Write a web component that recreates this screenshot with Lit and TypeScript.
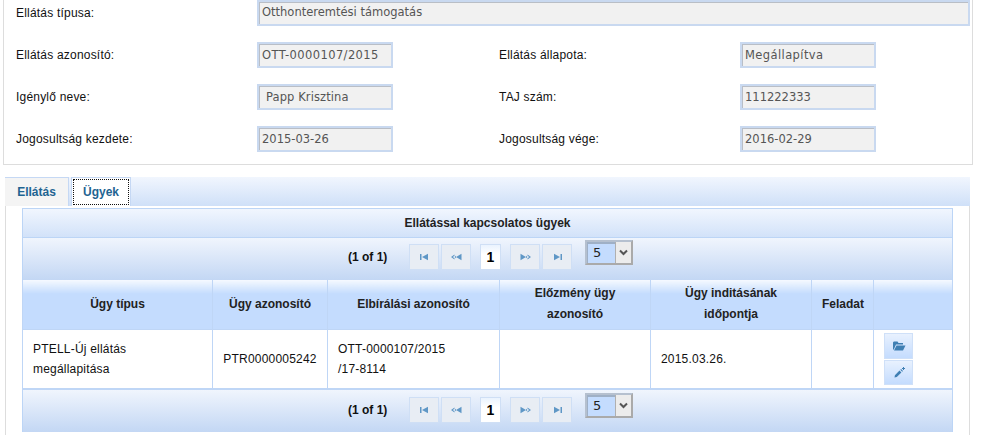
import { LitElement, html, css, svg } from "lit";
import { customElement } from "lit/decorators.js";

const ICONS: Record<string, unknown> = {
  first: svg`<path d="M1 1h1.500v6H1zM3 4l6-3.200v6.400z" />`,
  prev: svg`<path d="M0 4l3.500-2.500v1.200L1.800 4l1.700 1.300v1.200zM5 4l5.500-3.200v6.400zM3.500 4L5 2.800v2.400z" />`,
  next: svg`<path d="M11 4L7.500 1.500v1.200L9.200 4 7.500 5.300v1.200zM.5.800L6 4 .5 7.200zM6 2.800L7.500 4 6 5.200z" />`,
  last: svg`<path d="M8.500 1H10v6H8.500zM8 4L2 .8v6.400z" />`,
};

@customElement("app-root")
export class AppRoot extends LitElement {
  static styles = css`
    :host { display: block; width: 1004px; height: 435px; overflow: hidden; background: #fff; font-family: "Liberation Sans", Arial, sans-serif; font-size: 12px; color: #000; }
    .panel { margin: -4px 0 0 3px; width: 970px; height: 169px; box-sizing: border-box; border: 1px solid #ddd; display: grid; grid-template-columns: 241px 136px 347px 136px; grid-auto-rows: 26px; row-gap: 16px; padding: 3px 0 0 12px; }
    .lab { display: flex; align-items: center; height: 26px; line-height: 14px; color: #111; box-sizing: border-box; letter-spacing: .2px; }
    .gap { padding-left: 106px; }
    .inp { box-sizing: border-box; height: 26px; background: #f1f1f1; border: 2px solid #c9d9f0; box-shadow: inset 1px 1px 0 #b9bec6; font-family: "DejaVu Sans", sans-serif; font-size: 11.5px; color: #555; line-height: 23px; padding-left: 3px; white-space: nowrap; }
    .inp.wide { grid-column: 2 / 5; width: 713px; line-height: 21px; }
    .inp.pad { padding-left: 7px; letter-spacing: .1px; }
    .inp.ls { letter-spacing: .4px; }
    .tabbar { margin: 12px 0 0 5px; width: 965px; height: 29px; background: linear-gradient(#f1f6fe, #cfe0f8); display: flex; gap: 2px; align-items: stretch; }
    .tab { box-sizing: border-box; border: 1px solid #c5d8f4; border-bottom: 0; border-left: 0; font-weight: bold; color: #1f6492; display: flex; align-items: center; justify-content: center; }
    .tab.a { width: 64px; background: #f4f4f4; }
    .tab.b { width: 60px; background: #fff; position: relative; border-left: 1px solid #c5d8f4; }
    .tab.b span { position: absolute; inset: 1px; border: 1px dotted #111; display: flex; align-items: center; justify-content: center; }
    .body { margin-left: 5px; width: 965px; height: 229px; box-sizing: border-box; border: 1px solid #ddd; border-width: 0 1px; padding: 2px 0 0 16px; }
    .wrap { width: 931px; }
    .title { box-sizing: border-box; height: 30px; background: linear-gradient(#f1f6fe, #d2e2f9); border: 1px solid #bcd5f6; display: flex; align-items: center; justify-content: center; font-weight: bold; color: #222; }
    .pag { position: relative; box-sizing: border-box; height: 42px; background: linear-gradient(#f0f5fd, #c3d7f4); display: flex; align-items: flex-start; padding: 6px 0 0 325px; border: 0 solid #bcd5f6; border-width: 0 1px; }
    .pag.bot { padding-top: 7px; }
    .cur { font-weight: bold; width: 61px; color: #111; line-height: 26px; }
    .pb { box-sizing: border-box; width: 30px; height: 26px; margin-right: 2px; background: #e8edf4; border: 1px solid #cfdff5; display: flex; align-items: center; justify-content: center; color: #5f97c6; }
    .pb svg { width: 11px; height: 8px; fill: currentColor; }
    .pb.gap1 { margin-right: 9px; }
    .num { box-sizing: border-box; width: 21px; height: 26px; margin-right: 9px; background: linear-gradient(#eaf3fe, #fff 40%); border: 1px solid #cfdff5; display: flex; align-items: center; justify-content: center; font-weight: bold; font-size: 14px; color: #000; }
    .sel { position: absolute; left: 562px; top: 2px; box-sizing: border-box; width: 48px; height: 25px; border: 2px solid #b5c0cf; border-right-color: #aaa; border-bottom-color: #aaa; background: #c4dcfe; display: flex; font-family: "DejaVu Sans", sans-serif; font-size: 13px; color: #222; }
    .pag.bot .sel { top: 3px; }
    .sel .v { flex: 1; padding: 1px 0 0 5px; line-height: 16px; border-top: 2px solid #9fb0c6; border-left: 1px solid #9fb0c6; }
    .sel .dd { box-sizing: border-box; width: 16px; background: #ececec; border-left: 1px solid #b0b0b0; display: flex; align-items: center; justify-content: center; }
    .sel .dd svg { width: 9px; height: 7px; }
    table { border-collapse: collapse; table-layout: fixed; width: 930px; }
    th, td { border: 1px solid #bfd6f6; padding: 0 10px; line-height: 20px; box-sizing: border-box; }
    th { height: 49px; background: linear-gradient(#f5f9ff, #c4dcfe 28%); text-align: center; font-weight: bold; color: #222; border-top: 0; line-height: 21px; }
    td { height: 60px; background: #fff; color: #111; text-align: left; letter-spacing: .2px; border-bottom-width: 2px; }
    td.c { text-align: center; padding: 0; }
    .acts { display: flex; flex-direction: column; gap: 1px; width: 29px; margin: 1px 0 0 10px; }
    .ab { box-sizing: border-box; height: 26px; background: linear-gradient(#e8f1fe, #c4dcfe); border: 1px solid #cfe0f8; display: flex; align-items: center; justify-content: center; }
    .ab + .ab { height: 25px; }
    .ab svg { width: 14px; height: 12px; fill: #3f7fb3; }
    .cw1 { width: 190px; } .cw2 { width: 115px; } .cw3 { width: 172px; } .cw4 { width: 151px; } .cw5 { width: 161px; } .cw6 { width: 62px; } .cw7 { width: 79px; }
  `;

  pager(bot = false) {
    return html`<div class="pag ${bot ? "bot" : ""}">
      <span class="cur">(1 of 1)</span>
      <span class="pb"><svg viewBox="0 0 11 8">${ICONS.first}</svg></span>
      <span class="pb gap1"><svg viewBox="0 0 11 8">${ICONS.prev}</svg></span>
      <span class="num">1</span>
      <span class="pb"><svg viewBox="0 0 11 8">${ICONS.next}</svg></span>
      <span class="pb"><svg viewBox="0 0 11 8">${ICONS.last}</svg></span>
      <span class="sel"><span class="v">5</span><span class="dd"><svg viewBox="0 0 9 7"><path d="M1 1.500l3.500 3.500L8 1.500" fill="none" stroke="#555" stroke-width="2"/></svg></span></span>
    </div>`;
  }

  render() {
    return html`
      <div class="panel">
        <div class="lab">Ellátás típusa:</div>
        <div class="inp wide">Otthonteremtési támogatás</div>
        <div class="lab">Ellátás azonosító:</div>
        <div class="inp ls">OTT-0000107/2015</div>
        <div class="lab gap">Ellátás állapota:</div>
        <div class="inp ls">Megállapítva</div>
        <div class="lab">Igénylő neve:</div>
        <div class="inp pad">Papp Krisztina</div>
        <div class="lab gap">TAJ szám:</div>
        <div class="inp">111222333</div>
        <div class="lab">Jogosultság kezdete:</div>
        <div class="inp">2015-03-26</div>
        <div class="lab gap">Jogosultság vége:</div>
        <div class="inp">2016-02-29</div>
      </div>
      <div class="tabbar">
        <div class="tab a">Ellátás</div>
        <div class="tab b"><span>Ügyek</span></div>
      </div>
      <div class="body"><div class="wrap">
        <div class="title">Ellátással kapcsolatos ügyek</div>
        ${this.pager()}
        <table>
          <colgroup><col class="cw1"/><col class="cw2"/><col class="cw3"/><col class="cw4"/><col class="cw5"/><col class="cw6"/><col class="cw7"/></colgroup>
          <thead><tr>
            <th>Ügy típus</th><th>Ügy azonosító</th><th>Elbírálási azonosító</th><th>Előzmény ügy azonosító</th><th>Ügy inditásának időpontja</th><th>Feladat</th><th></th>
          </tr></thead>
          <tbody><tr>
            <td>PTELL-Új ellátás<br />megállapitása</td>
            <td class="c">PTR0000005242</td>
            <td>OTT-0000107/2015<br />/17-8114</td>
            <td></td>
            <td>2015.03.26.</td>
            <td></td>
            <td class="c"><div class="acts">
              <span class="ab"><svg viewBox="0 0 14 12"><path d="M1 3c0-1 .5-1.500 1.500-1.500h3L6.500 3H11v1.500H4L1.800 9.500 1 9.500zM4.500 5.500H13.500L11 10.500H2z"/></svg></span>
              <span class="ab"><svg viewBox="0 0 14 12"><path d="M2.500 10.500l.4-2.300L7.500 3.600l1.900 1.900-4.600 4.600zM8.300 2.800l.8-.8 1.900 1.900-.8.8zM11 0h1v1h1v1h-1v1h-1V2h-1V1h1z"/></svg></span>
            </div></td>
          </tr></tbody>
        </table>
        ${this.pager(true)}
      </div></div>
    `;
  }
}
